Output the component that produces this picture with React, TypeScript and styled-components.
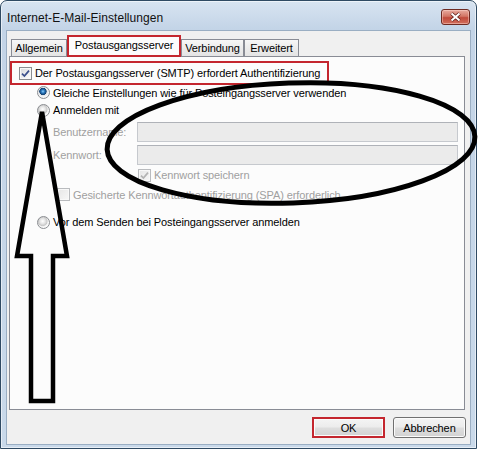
import React from "react";
import styled, { createGlobalStyle } from "styled-components";

const RED = "#c4262e";

const GlobalStyle = createGlobalStyle`
  html, body {
    margin: 0;
    padding: 0;
    background: #ffffff;
  }
  body {
    font-family: "Liberation Sans", Arial, sans-serif;
    font-size: 11px;
    letter-spacing: -0.1px;
    color: #000;
  }
`;

const Window = styled.div`
  position: relative;
  box-sizing: border-box;
  width: 477px;
  height: 449px;
  border: 1px solid #2f4a63;
  border-radius: 7px 7px 0 0;
  background: linear-gradient(#d8e4f1, #c3d4e7 28px, #c9d9ea);
  box-shadow: inset 0 0 0 1px rgba(255, 255, 255, 0.55);
  padding: 0 5px 3px 5px;
  display: flex;
  flex-direction: column;
`;

const TitleBar = styled.div`
  height: 29px;
  display: flex;
  align-items: flex-start;
  justify-content: space-between;
`;

const Title = styled.div`
  font-size: 12px;
  letter-spacing: 0.05px;
  line-height: 14px;
  padding: 10px 0 0 1px;
  color: #111;
`;

const CloseButton = styled.div`
  box-sizing: border-box;
  width: 29px;
  height: 16px;
  margin: 8px 1px 0 0;
  border: 1px solid #6d2a22;
  border-radius: 3px;
  background: linear-gradient(#e8ab9f, #d27565 45%, #c04a3b 55%, #d26f5e);
  box-shadow: inset 0 0 0 1px rgba(255, 220, 210, 0.45);
  display: flex;
  align-items: center;
  justify-content: center;
`;

const Client = styled.div`
  flex: 1;
  border: 1px solid #9aaec3;
  background: #f0f0f0;
  padding: 4px 4px 0 2px;
  display: flex;
  flex-direction: column;
`;

const TabStrip = styled.div`
  display: flex;
  align-items: flex-end;
  height: 21px;
  margin-left: 2px;
`;

const Tab = styled.div<{ $w: number; $active?: boolean }>`
  box-sizing: border-box;
  width: ${(p) => p.$w}px;
  height: ${(p) => (p.$active ? 22 : 17)}px;
  margin-bottom: ${(p) => (p.$active ? -1 : 0)}px;
  position: relative;
  z-index: ${(p) => (p.$active ? 2 : 1)};
  border: ${(p) => (p.$active ? `2px solid ${RED}` : "1px solid #898c95")};
  border-bottom: ${(p) => (p.$active ? `2px solid ${RED}` : "none")};
  background: ${(p) =>
    p.$active ? "#fcfcfc" : "linear-gradient(#f7f7f7, #ececec 50%, #e4e4e4)"};
  text-align: center;
  line-height: 16px;
  white-space: nowrap;
  overflow: hidden;
`;

const Panel = styled.div`
  box-sizing: border-box;
  width: 456px;
  height: 354px;
  border: 1px solid #898c95;
  background: #fcfcfc;
  padding-top: 4px;
  display: flex;
  flex-direction: column;
`;

const Marked = styled.div`
  box-sizing: border-box;
  width: 319px;
  height: 24px;
  border: 2px solid ${RED};
  padding-left: 7px;
  display: flex;
  align-items: center;
  gap: 3px;
`;

const Row = styled.div<{ $indent: number; $h: number; $mt?: number }>`
  height: ${(p) => p.$h}px;
  margin-top: ${(p) => p.$mt ?? 0}px;
  padding-left: ${(p) => p.$indent}px;
  display: flex;
  align-items: center;
  gap: 3px;
  white-space: nowrap;
`;

const Label = styled.span<{ $off?: boolean; $w?: number }>`
  color: ${(p) => (p.$off ? "#a0a0a0" : "#000")};
  ${(p) => (p.$w ? `width: ${p.$w}px; flex: none;` : "")}
`;

const Field = styled.input`
  flex: 1;
  min-width: 0;
  height: 20px;
  box-sizing: border-box;
  margin: 0 6px 0 0;
  padding: 0;
  border: 1px solid #c6c9ce;
  border-top-color: #afb2b8;
  background: #ebebeb;
  appearance: none;
`;

const RadioDot = styled.span<{ $on?: boolean }>`
  flex: none;
  width: 13px;
  height: 13px;
  box-sizing: border-box;
  border-radius: 50%;
  border: 1px solid #8a8d91;
  background: ${(p) =>
    p.$on
      ? "radial-gradient(circle at 45% 40%, #8fd0f5 0, #2d7cc4 1.6px, #123f6e 3.4px, #dfe3e8 3.9px, #f6f6f6 5.5px)"
      : "radial-gradient(circle at 42% 38%, #ffffff 0, #e6e6e6 2.5px, #c8c8c8 4.5px, #ededed 5.2px, #fafafa 6px)"};
`;

const CheckBox = styled.span<{ $off?: boolean }>`
  flex: none;
  width: 13px;
  height: 13px;
  box-sizing: border-box;
  border: 1px solid ${(p) => (p.$off ? "#b9bbbe" : "#8a8d91")};
  background: ${(p) =>
    p.$off
      ? "linear-gradient(135deg, #e6e6e6, #f7f7f7)"
      : "linear-gradient(135deg, #d6d8db, #ffffff)"};
  box-shadow: inset 0 0 0 1px #f8f8f8;
  display: flex;
  align-items: center;
  justify-content: center;
`;

const ButtonRow = styled.div`
  display: flex;
  justify-content: flex-end;
  gap: 8px;
  margin-top: 7px;
`;

const Button = styled.div<{ $marked?: boolean }>`
  box-sizing: border-box;
  width: 73px;
  height: 21px;
  border: ${(p) => (p.$marked ? `2px solid ${RED}` : "1px solid #707070")};
  border-radius: ${(p) => (p.$marked ? 0 : 3)}px;
  background: linear-gradient(#f4f4f4, #ececec 48%, #dedede 52%, #d2d2d2);
  box-shadow: inset 0 0 0 1px #fbfbfb;
  display: flex;
  align-items: center;
  justify-content: center;
`;

const Overlay = styled.svg`
  position: absolute;
  left: -1px;
  top: -1px;
  pointer-events: none;
  overflow: visible;
`;

const Check = ({ off }: { off?: boolean }) => (
  <svg width="9" height="9" viewBox="0 0 9 9">
    <path
      d="M1 4.6 L3.4 7 L8 1.6"
      fill="none"
      stroke={off ? "#b3b3b3" : "#3a4f8c"}
      strokeWidth="1.7"
    />
  </svg>
);

const Radio = ({ on, children, off }: { on?: boolean; off?: boolean; children: React.ReactNode }) => (
  <>
    <RadioDot $on={on} />
    <Label $off={off}>{children}</Label>
  </>
);

export default function App() {
  return (
    <>
      <GlobalStyle />
      <Window>
        <TitleBar>
          <Title>Internet-E-Mail-Einstellungen</Title>
          <CloseButton>
            <svg width="13" height="10" viewBox="0 0 13 10">
              <path d="M2.5 1.5 L10.5 8.5 M10.5 1.5 L2.5 8.5" stroke="#5b1c15" strokeWidth="3.6" />
              <path d="M2.5 1.5 L10.5 8.5 M10.5 1.5 L2.5 8.5" stroke="#ffffff" strokeWidth="2.1" />
            </svg>
          </CloseButton>
        </TitleBar>
        <Client>
          <TabStrip>
            <Tab $w={56}>Allgemein</Tab>
            <Tab $w={114} $active>
              Postausgangsserver
            </Tab>
            <Tab $w={63}>Verbindung</Tab>
            <Tab $w={55}>Erweitert</Tab>
          </TabStrip>
          <Panel>
            <Marked>
              <CheckBox>
                <Check />
              </CheckBox>
              <Label>Der Postausgangsserver (SMTP) erfordert Authentifizierung</Label>
            </Marked>
            <Row $indent={27} $h={15}>
              <Radio on>Gleiche Einstellungen wie für Posteingangsserver verwenden</Radio>
            </Row>
            <Row $indent={27} $h={20}>
              <Radio>Anmelden mit</Radio>
            </Row>
            <Row $indent={43} $h={20} $mt={2}>
              <Label $off $w={81}>
                Benutzername:
              </Label>
              <Field disabled />
            </Row>
            <Row $indent={43} $h={20} $mt={3}>
              <Label $off $w={81}>
                Kennwort:
              </Label>
              <Field disabled />
            </Row>
            <Row $indent={128} $h={20}>
              <CheckBox $off>
                <Check off />
              </CheckBox>
              <Label $off>Kennwort speichern</Label>
            </Row>
            <Row $indent={47} $h={19}>
              <CheckBox $off />
              <Label $off>Gesicherte Kennwortauthentifizierung (SPA) erforderlich</Label>
            </Row>
            <Row $indent={27} $h={20} $mt={8}>
              <Radio>Vor dem Senden bei Posteingangsserver anmelden</Radio>
            </Row>
          </Panel>
          <ButtonRow>
            <Button $marked>OK</Button>
            <Button>Abbrechen</Button>
          </ButtonRow>
        </Client>
        <Overlay width="478" height="455" viewBox="0 0 478 455">
          <ellipse
            cx="291"
            cy="143"
            rx="184"
            ry="60"
            transform="rotate(-2 291 143)"
            fill="none"
            stroke="#000"
            strokeWidth="5"
          />
          <polygon
            points="42,112 67,256 53,256 53,401 31,401 31,256 17,256"
            fill="none"
            stroke="#000"
            strokeWidth="4.5"
            strokeLinejoin="miter"
          />
        </Overlay>
      </Window>
    </>
  );
}
